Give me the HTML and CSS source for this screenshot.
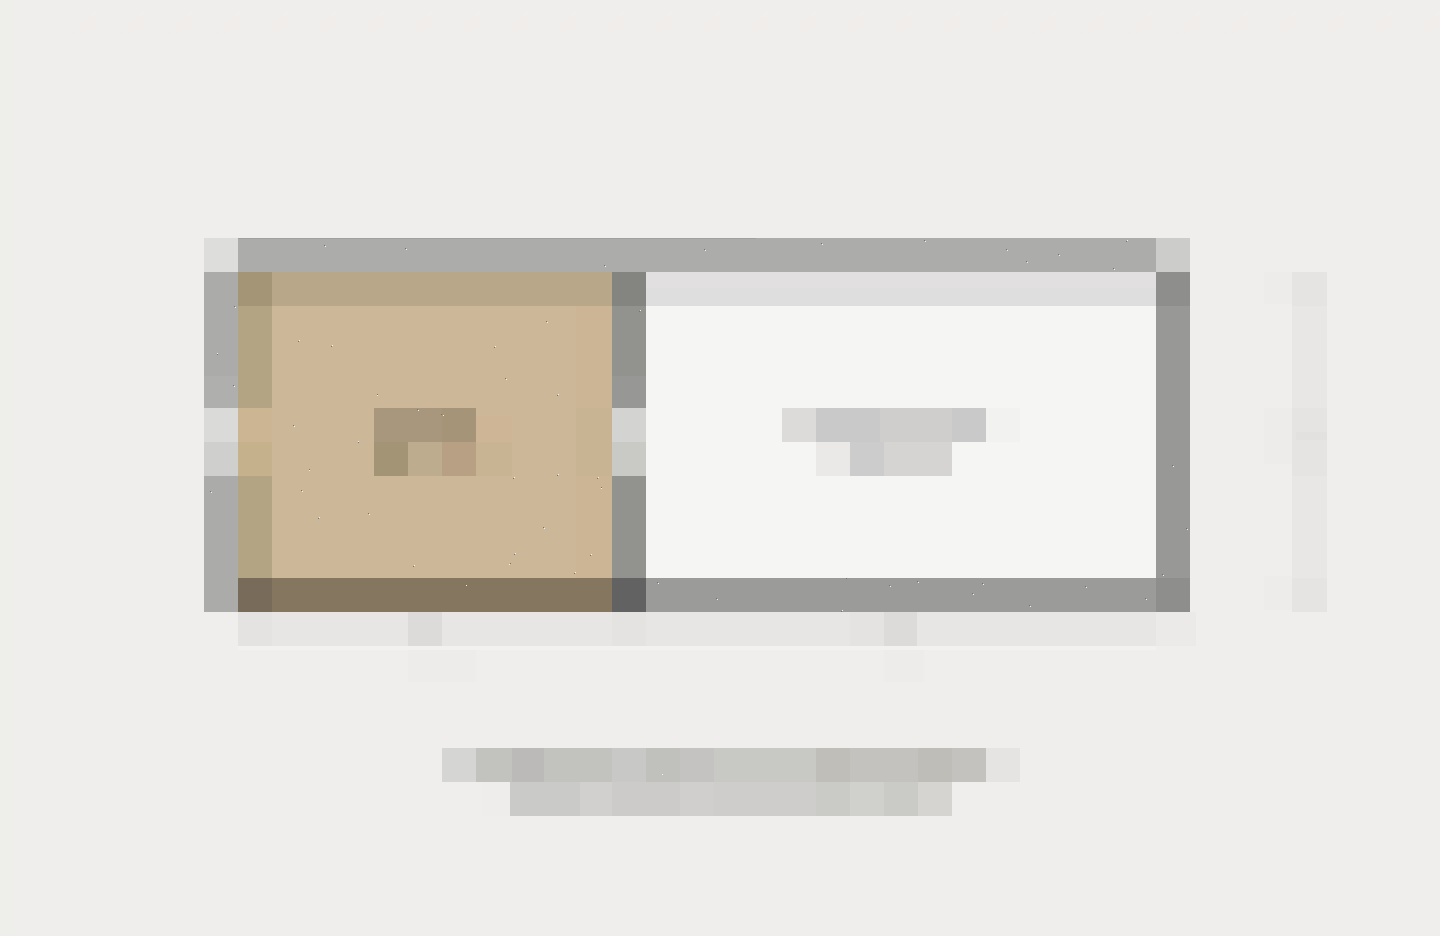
FILE: index.html
```html
<!DOCTYPE html>
<html lang="en">
<head>
<meta charset="utf-8">
<meta name="viewport" content="width=device-width, initial-scale=1">
<title>Floor plan</title>
<link rel="stylesheet" href="styles.css">
</head>
<body>
<main class="page">
<svg class="plan" viewBox="0 0 1440 936" role="img" aria-label="Mosaic floor plan with two rooms">
  <defs>
    <pattern id="haze" width="48" height="48" patternUnits="userSpaceOnUse">
      <path d="M8 48 48 8V24L24 48z" fill="#f2edeb"/>
    </pattern>
    <linearGradient id="fade" x2="0" y2="1">
      <stop stop-color="#efeeec" stop-opacity=".3"/>
      <stop offset="1" stop-color="#efeeec"/>
    </linearGradient>
  </defs>
  <path fill="url(#haze)" d="M48 0H1440V48H48z"/>
  <path fill="url(#fade)" d="M48 0H1440V48H48z"/>
  <path fill="#eeefeb" d="M0 0H14V936H0z"/>

  <!-- Outer walls -->
  <path fill="#acacab" d="M238 238H1156V272H238z"/>
  <path fill="#a0a09f" d="M238 238H756V239H238z"/>
  <path fill="#dddddb" d="M204 238H238V272H204z"/>
  <path fill="#cccccb" d="M1156 238H1190V272H1156z"/>
  <path fill="#ababaa" d="M204 272H238V408H204zM204 476H238V612H204z"/>
  <path fill="#afafad" d="M204 376H238V408H204z"/>
  <path fill="#dadad8" d="M204 408H238V442H204z"/>
  <path fill="#cfcfcd" d="M204 442H238V476H204z"/>

  <!-- Left room -->
  <path fill="#ccb898" d="M238 272H612V578H238z"/>
  <path fill="#ccb594" d="M576 306H612V578H576z"/>
  <path fill="#c8b492" d="M576 408H612V476H576z"/>
  <path fill="#b8a788" d="M238 272H612V306H238z"/>
  <path fill="#b3a483" d="M238 306H272V408H238zM238 476H272V578H238z"/>
  <path fill="#a49577" d="M238 272H272V306H238z"/>
  <path fill="#cbb592" d="M238 408H272V442H238z"/>
  <path fill="#c5b18c" d="M238 442H272V476H238z"/>
  <path fill="#84765f" d="M238 578H612V612H238z"/>
  <path fill="#796b59" d="M238 578H272V612H238z"/>
  <path fill="#a8977d" d="M374 408H442V442H374z"/>
  <path fill="#a59477" d="M442 408H476V442H442z"/>
  <path fill="#a39475" d="M374 442H408V476H374z"/>
  <path fill="#beac8e" d="M408 442H442V476H408z"/>
  <path fill="#b7a083" d="M442 442H476V476H442z"/>
  <path fill="#ceb595" d="M476 416H512V442H476z"/>
  <path fill="#c8b492" d="M476 442H512V476H476z"/>

  <!-- Right room -->
  <path fill="#f5f5f4" d="M646 306H1156V578H646z"/>
  <path fill="#dedede" d="M646 272H1156V306H646z"/>
  <path fill="#e1dfdf" d="M646 272H1156V288H646z"/>
  <path fill="#9b9b9a" d="M646 578H1156V612H646z"/>
  <path fill="#989896" d="M1156 272H1190V612H1156z"/>
  <path fill="#8e8e8c" d="M1156 272H1190V306H1156zM1156 578H1190V612H1156z"/>
  <path fill="#dcdbd9" d="M782 408H816V442H782z"/>
  <path fill="#cac9c9" d="M816 408H880V442H816zM952 408H986V442H952z"/>
  <path fill="#cfcecc" d="M880 408H952V442H880z"/>
  <path fill="#f2f2f1" d="M986 408H1020V442H986z"/>
  <path fill="#eae9e7" d="M816 442H850V476H816z"/>
  <path fill="#cdcccc" d="M850 442H884V476H850z"/>
  <path fill="#d5d4d2" d="M884 442H952V476H884z"/>

  <!-- Dividing wall -->
  <path fill="#92928f" d="M612 306H646V408H612zM612 476H646V578H612z"/>
  <path fill="#848481" d="M612 272H646V306H612z"/>
  <path fill="#979795" d="M612 376H646V408H612z"/>
  <path fill="#d3d3d1" d="M612 408H646V442H612z"/>
  <path fill="#c9cac5" d="M612 442H646V476H612z"/>
  <path fill="#636262" d="M612 578H646V612H612z"/>

  <!-- Lower dimension line -->
  <path fill="#e7e6e4" d="M238 612H1156V646H238z"/>
  <path fill="#e4e3e1" d="M238 612H272V646H238zM612 612H646V646H612zM850 612H884V646H850z"/>
  <path fill="#eceae9" d="M1156 612H1196V646H1156z"/>
  <path fill="#dcdbd9" d="M408 612H442V646H408zM884 612H917V646H884z"/>
  <path fill="#f2f1ef" d="M238 646H1156V650H238z"/>
  <path fill="#edecea" d="M408 650H476V682H408zM884 650H924V682H884z"/>

  <!-- Side dimension line -->
  <path fill="#e8e7e5" d="M1292 272H1327V612H1292z"/>
  <path fill="#e5e4e2" d="M1292 272H1327V306H1292zM1292 408H1327V476H1292zM1292 578H1327V612H1292z"/>
  <path fill="#e2e1df" d="M1296 432H1327V440H1296z"/>
  <path fill="#edecea" d="M1264 272H1292V304H1264zM1264 408H1292V464H1264zM1264 576H1292V610H1264z"/>

  <!-- Caption mosaic -->
  <path fill="#d5d5d3" d="M442 748H476V782H442z"/>
  <path fill="#c2c2bf" d="M476 748H612V782H476z"/>
  <path fill="#bbbab8" d="M512 748H544V782H512z"/>
  <path fill="#c8c9c6" d="M612 748H646V782H612z"/>
  <path fill="#c0c0bd" d="M646 748H680V782H646z"/>
  <path fill="#c4c3c1" d="M680 748H714V782H680z"/>
  <path fill="#c8c8c5" d="M714 748H816V782H714z"/>
  <path fill="#bfbeb9" d="M816 748H850V782H816z"/>
  <path fill="#c3c2bf" d="M850 748H986V782H850z"/>
  <path fill="#bfbdb8" d="M918 748H952V782H918z"/>
  <path fill="#e5e4e2" d="M986 748H1020V782H986z"/>
  <path fill="#eeedeb" d="M482 782H510V816H482z"/>
  <path fill="#cacac8" d="M510 782H580V816H510z"/>
  <path fill="#d1d0ce" d="M580 782H612V816H580z"/>
  <path fill="#cdcbc9" d="M612 782H680V816H612z"/>
  <path fill="#d0cfcd" d="M680 782H714V816H680z"/>
  <path fill="#cecdcb" d="M714 782H816V816H714z"/>
  <path fill="#cacac7" d="M816 782H850V816H816zM884 782H918V816H884z"/>
  <path fill="#d0d0cd" d="M850 782H884V816H850z"/>
  <path fill="#d5d4d1" d="M918 782H952V816H918z"/>

  <!-- Speckles: dark grains beneath light ones -->
  <g fill="none" stroke-width="1">
    <path stroke="#77736c" d="M324 245h1M405 248h1M604 265h1M704 249h1M821 243h1M924 240h1M1006 249h1M1026 261h1M1058 254h1M1113 268h1M1126 241h1M234 306h1M217 354h1M233 385h1M546 321h1M298 341h1M331 346h1M494 347h1M505 378h1M377 394h1M557 395h1M417 409h1M441 414h1M293 425h1M358 442h1M309 469h1M301 490h1M210 491h1M318 518h1M368 513h1M413 566h1M514 554h1M510 563h1M543 527h1M590 555h1M574 573h1M465 584h1M513 478h1M557 475h1M597 478h1M601 487h1M639 311h1M657 582h1M716 598h1M846 578h1M889 585h1M917 581h1M972 593h1M982 583h1M1085 586h1M1029 605h1M1145 598h1M841 611h1M1172 465h1M1186 528h1M1162 574h1"/>
    <path stroke="#f5f1e8" d="M325 246h1M406 249h1M605 266h1M705 250h1M822 244h1M925 241h1M1007 250h1M1027 262h1M1059 255h1M1114 269h1M1127 240h1M235 307h1M217 353h1M234 386h1M547 322h1M299 340h1M332 345h1M495 346h1M506 379h1M377 395h1M558 394h1M418 410h1M443 415h1M294 426h1M358 441h1M309 470h1M302 491h1M211 492h1M319 517h1M369 514h1M414 565h1M515 553h1M509 564h1M544 528h1M591 554h1M575 572h1M466 585h1M514 477h1M558 474h1M598 477h1M601 488h1M640 310h1M658 583h1M717 599h1M847 577h1M890 586h1M918 582h1M973 594h1M983 584h1M1086 587h1M1030 606h1M1146 599h1M842 610h1M1173 466h1M1187 529h1M1163 575h1M662 774h1"/>
  </g>
</svg>
</main>
</body>
</html>
```

FILE: styles.css
```css
body {
  margin: 0;
  background: #efeeec;
}

.page {
  display: flex;
  justify-content: center;
}

.plan {
  display: block;
  width: 100%;
  height: auto;
  shape-rendering: crispEdges;
}
```
